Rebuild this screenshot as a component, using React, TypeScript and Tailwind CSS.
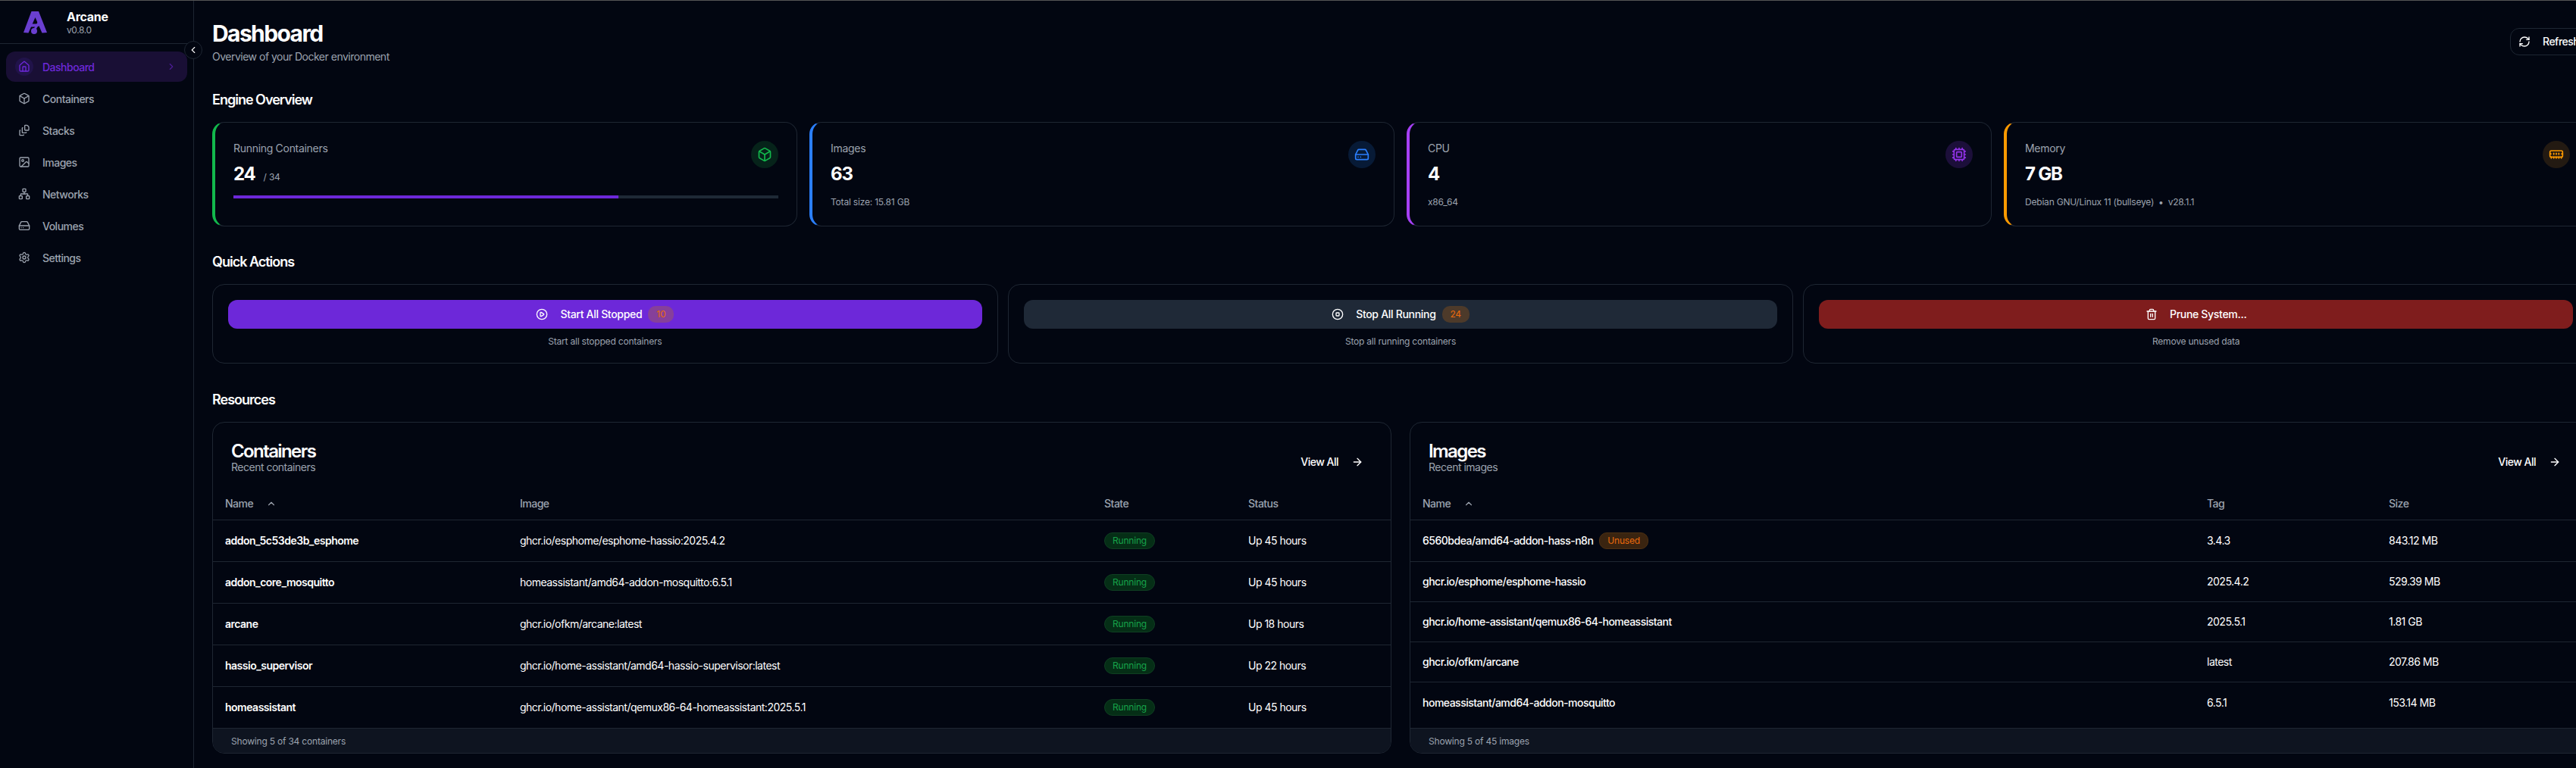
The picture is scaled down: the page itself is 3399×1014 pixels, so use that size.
import {
  ArrowRight,
  Box,
  ChevronLeft,
  ChevronRight,
  ChevronUp,
  CirclePlay,
  CircleStop,
  Cpu,
  FileStack,
  HardDrive,
  House,
  Image as ImageIcon,
  MemoryStick,
  Network,
  RefreshCw,
  Settings,
  Trash2,
} from "lucide-react"
import type { ReactNode } from "react"

const navItems = [
  { label: "Dashboard", icon: House, active: true },
  { label: "Containers", icon: Box },
  { label: "Stacks", icon: FileStack },
  { label: "Images", icon: ImageIcon },
  { label: "Networks", icon: Network },
  { label: "Volumes", icon: HardDrive },
  { label: "Settings", icon: Settings },
]

const containers = [
  ["addon_5c53de3b_esphome", "ghcr.io/esphome/esphome-hassio:2025.4.2", "Up 45 hours"],
  ["addon_core_mosquitto", "homeassistant/amd64-addon-mosquitto:6.5.1", "Up 45 hours"],
  ["arcane", "ghcr.io/ofkm/arcane:latest", "Up 18 hours"],
  ["hassio_supervisor", "ghcr.io/home-assistant/amd64-hassio-supervisor:latest", "Up 22 hours"],
  ["homeassistant", "ghcr.io/home-assistant/qemux86-64-homeassistant:2025.5.1", "Up 45 hours"],
]

const images = [
  ["6560bdea/amd64-addon-hass-n8n", "3.4.3", "843.12 MB"],
  ["ghcr.io/esphome/esphome-hassio", "2025.4.2", "529.39 MB"],
  ["ghcr.io/home-assistant/qemux86-64-homeassistant", "2025.5.1", "1.81 GB"],
  ["ghcr.io/ofkm/arcane", "latest", "207.86 MB"],
  ["homeassistant/amd64-addon-mosquitto", "6.5.1", "153.14 MB"],
]

function Logo() {
  return (
    <svg width="31" height="31" viewBox="0 0 31 31" fill="none" className="shrink-0">
      <path d="M10.5 1 L20 1 L31 29 L24.5 29.5 L15.5 9 L6.5 29.5 L0 29 Z" fill="#6a3fd0" />
      <path d="M6.5 19.5 H16.5 Q20.5 19.5 20.5 15" stroke="#6a3fd0" strokeWidth="4" />
      <path d="M18.5 18.5 L14 26" stroke="#6a3fd0" strokeWidth="3" />
      <circle cx="14" cy="27" r="4" fill="#6a3fd0" />
    </svg>
  )
}

function Sidebar() {
  return (
    <aside className="relative w-[256px] shrink-0 border-r border-[#1e2632]">
      <div className="flex h-[57px] items-center gap-[26px] border-b border-[#1e2632] pl-[31px]">
        <Logo />
        <div className="flex flex-col pt-[2px]">
          <span className="text-base font-bold leading-5 tracking-[-0.3px] text-white">Arcane</span>
          <span className="text-xs leading-4 tracking-[-0.4px] text-[#9ca3af]">v0.8.0</span>
        </div>
      </div>
      <button className="absolute left-[243px] top-[53px] z-10 flex h-6 w-6 items-center justify-center rounded-full border border-[#1e2632] bg-[#020611] text-white">
        <ChevronLeft size={14} />
      </button>
      <nav className="flex flex-col gap-[2px] px-2 pt-[10px]">
        {navItems.map((item) => (
          <div
            key={item.label}
            className={
              item.active
                ? "flex h-10 items-center gap-3 rounded-xl bg-[#190f35] px-3 text-sm font-medium text-[#6d28d9]"
                : "flex h-10 items-center gap-3 rounded-xl px-3 text-sm font-medium text-[#9ca3af]"
            }
          >
            <span
              className={
                item.active
                  ? "flex h-6 w-6 items-center justify-center rounded-full bg-[#21134a]"
                  : "flex h-6 w-6 items-center justify-center rounded-full"
              }
            >
              <item.icon size={16} />
            </span>
            <span className="flex-1 pt-px">{item.label}</span>
            {item.active && <ChevronRight size={14} className="mr-[2px] text-[#4c1d95]" />}
          </div>
        ))}
      </nav>
    </aside>
  )
}

function SectionTitle({ children }: { children: ReactNode }) {
  return <h2 className="text-lg font-semibold leading-7 tracking-[-1px] text-white">{children}</h2>
}

function StatCard({
  label,
  value,
  suffix,
  sub,
  borderClass,
  circleClass,
  icon,
  progress,
}: {
  label: string
  value: string
  suffix?: string
  sub?: ReactNode
  borderClass: string
  circleClass: string
  icon: ReactNode
  progress?: number
}) {
  return (
    <div className={`flex h-[138px] flex-col rounded-2xl border border-l-4 border-[#1e2632] p-6 ${borderClass}`}>
      <div className="flex items-start justify-between">
        <div>
          <p className="text-sm leading-5 tracking-[-0.3px] text-[#9ca3af]">{label}</p>
          <p className="mt-2 flex items-baseline gap-[11px] leading-8">
            <span className="text-2xl font-bold tracking-[-1.2px] text-white">{value}</span>
            {suffix && <span className="text-xs tracking-[-0.2px] text-[#9ca3af]">{suffix}</span>}
          </p>
        </div>
        <div className={`flex h-9 w-9 items-center justify-center rounded-full ${circleClass}`}>{icon}</div>
      </div>
      {progress !== undefined && (
        <div className="mt-3 h-1 w-full bg-[#1e2936]">
          <div className="h-full bg-[#6d28d9]" style={{ width: `${progress}%` }} />
        </div>
      )}
      {sub && <p className="mt-[13px] text-xs leading-4 tracking-[-0.2px] text-[#9ca3af]">{sub}</p>}
    </div>
  )
}

function ActionCard({
  label,
  help,
  icon,
  count,
  buttonClass,
  countClass,
}: {
  label: string
  help: string
  icon: ReactNode
  count?: number
  buttonClass: string
  countClass?: string
}) {
  return (
    <div className="flex h-[105px] flex-col items-center rounded-2xl border border-[#1e2632] p-5">
      <button className={`flex h-10 w-full items-center justify-center rounded-xl text-sm font-medium tracking-[-0.3px] text-white ${buttonClass}`}>
        {icon}
        <span className="ml-4">{label}</span>
        {count !== undefined && (
          <span className={`ml-2 flex h-[22px] items-center rounded-[10px] px-[11px] text-xs font-normal ${countClass}`}>
            {count}
          </span>
        )}
      </button>
      <p className="mt-[9px] text-xs leading-4 tracking-[-0.2px] text-[#9ca3af]">{help}</p>
    </div>
  )
}

function ResourceCard({
  title,
  subtitle,
  footer,
  children,
}: {
  title: string
  subtitle: string
  footer: string
  children: ReactNode
}) {
  return (
    <div className="flex h-[438px] flex-col overflow-hidden rounded-2xl border border-[#1e2632]">
      <div className="flex h-[85px] items-start justify-between pl-6 pr-9 pt-[22px]">
        <div>
          <h3 className="text-2xl font-semibold leading-8 tracking-[-1.6px] text-white">{title}</h3>
          <p className="-mt-[3px] text-sm leading-4 text-[#9ca3af]">{subtitle}</p>
        </div>
        <button className="mt-3 flex h-9 items-center gap-[17px] text-sm font-medium text-white">
          View All
          <ArrowRight size={16} />
        </button>
      </div>
      <div className="flex-1">{children}</div>
      <div className="flex h-[33px] items-center border-t border-[#1e2632] bg-[#0e1420] px-6 pt-px text-xs tracking-[-0.2px] text-[#9ca3af]">
        {footer}
      </div>
    </div>
  )
}

function Header({ name, gridClass, cols }: { name: string; gridClass: string; cols: string[] }) {
  return (
    <div className={`grid h-[44px] items-center border-b border-[#1e2632] px-4 text-sm font-medium text-[#9ca3af] ${gridClass}`}>
      <span className="flex items-center gap-[17px]">
        {name}
        <ChevronUp size={14} />
      </span>
      {cols.map((col) => (
        <span key={col}>{col}</span>
      ))}
    </div>
  )
}

export default function App() {
  return (
    <div className="h-[1014px] w-[3399px] overflow-hidden bg-[#020611] font-['Inter',sans-serif] tracking-[-0.5px]">
      <div className="flex h-px w-full bg-[#555]" />
      <div className="flex h-[1013px] w-[3440px]">
        <Sidebar />
        <main className="flex-1 px-6">
          <div className="flex h-[87px] items-start justify-between">
            <div className="pt-[25px]">
              <h1 className="text-3xl font-bold leading-9 tracking-[-1.6px] text-white">Dashboard</h1>
              <p className="mt-[3px] text-sm leading-5 text-[#9ca3af]">Overview of your Docker environment</p>
            </div>
            <button className="mt-9 flex h-9 w-[104px] items-center gap-4 rounded-xl border border-[#1e2632] pl-[10px] text-sm font-medium text-white">
              <RefreshCw size={16} className="shrink-0" />
              Refresh
            </button>
          </div>

          <div className="mt-[30px]">
            <SectionTitle>Engine Overview</SectionTitle>
          </div>
          <div className="mt-[15px] grid grid-cols-4 gap-4">
            <StatCard
              label="Running Containers"
              value="24"
              suffix="/ 34"
              borderClass="border-l-[#12b84c]"
              circleClass="bg-[#06231a] text-[#12b84c]"
              icon={<Box size={20} />}
              progress={70.6}
            />
            <StatCard
              label="Images"
              value="63"
              sub="Total size: 15.81 GB"
              borderClass="border-l-[#2b7fff]"
              circleClass="bg-[#071a36] text-[#2b7fff]"
              icon={<HardDrive size={20} />}
            />
            <StatCard
              label="CPU"
              value="4"
              sub="x86_64"
              borderClass="border-l-[#a640f5]"
              circleClass="bg-[#1c0f3a] text-[#9333ea]"
              icon={<Cpu size={20} />}
            />
            <StatCard
              label="Memory"
              value="7 GB"
              sub={
                <>
                  Debian GNU/Linux 11 (bullseye)
                  <span className="mx-[6px]">•</span>
                  v28.1.1
                </>
              }
              borderClass="border-l-[#fe9a00]"
              circleClass="bg-[#231a12] text-[#fe9a00]"
              icon={<MemoryStick size={20} />}
            />
          </div>

          <div className="mt-[33px]">
            <SectionTitle>Quick Actions</SectionTitle>
          </div>
          <div className="mt-[15px] grid grid-cols-3 gap-[13px]">
            <ActionCard
              label="Start All Stopped"
              help="Start all stopped containers"
              icon={<CirclePlay size={16} />}
              count={10}
              buttonClass="bg-[#6d28d9]"
              countClass="bg-[#86409a] text-[#ea6a0c]"
            />
            <ActionCard
              label="Stop All Running"
              help="Stop all running containers"
              icon={<CircleStop size={16} />}
              count={24}
              buttonClass="bg-[#1f2937]"
              countClass="bg-[#4d3a2a] text-[#ea6a0c]"
            />
            <ActionCard
              label="Prune System..."
              help="Remove unused data"
              icon={<Trash2 size={16} />}
              buttonClass="bg-[#7f1d1d]"
            />
          </div>

          <div className="mt-[34px]">
            <SectionTitle>Resources</SectionTitle>
          </div>
          <div className="mt-[15px] grid grid-cols-2 gap-6">
            <ResourceCard title="Containers" subtitle="Recent containers" footer="Showing 5 of 34 containers">
              <Header name="Name" gridClass="grid-cols-[389px_771px_190px_1fr]" cols={["Image", "State", "Status"]} />
              {containers.map((row) => (
                <div
                  key={row[0]}
                  className="grid h-[55px] grid-cols-[389px_771px_190px_1fr] items-center border-b border-[#1e2632] px-4 text-sm text-white last:h-[54px] last:border-b-0"
                >
                  <span className="font-semibold">{row[0]}</span>
                  <span>{row[1]}</span>
                  <span>
                    <span className="inline-flex h-[22px] items-center rounded-full border border-[#0f3f22] bg-[#052e16] px-[10px] text-xs tracking-[-0.2px] text-[#16a34a]">
                      Running
                    </span>
                  </span>
                  <span>{row[2]}</span>
                </div>
              ))}
            </ResourceCard>
            <ResourceCard title="Images" subtitle="Recent images" footer="Showing 5 of 45 images">
              <Header name="Name" gridClass="grid-cols-[1035px_240px_1fr]" cols={["Tag", "Size"]} />
              {images.map((row, i) => (
                <div
                  key={row[0]}
                  className={
                    i === 0
                      ? "grid h-[55px] grid-cols-[1035px_240px_1fr] items-center border-b border-[#1e2632] px-4 text-sm text-white"
                      : "grid h-[53px] grid-cols-[1035px_240px_1fr] items-center border-b border-[#1e2632] px-4 text-sm text-white last:border-b-0"
                  }
                >
                  <span className="flex items-center gap-2 font-medium">
                    {row[0]}
                    {i === 0 && (
                      <span className="inline-flex h-[22px] items-center rounded-[10px] border border-[#4d3012] bg-[#3a2410] px-[10px] text-xs font-normal tracking-[-0.2px] text-[#ea6a0c]">
                        Unused
                      </span>
                    )}
                  </span>
                  <span>{row[1]}</span>
                  <span>{row[2]}</span>
                </div>
              ))}
            </ResourceCard>
          </div>
        </main>
      </div>
    </div>
  )
}
